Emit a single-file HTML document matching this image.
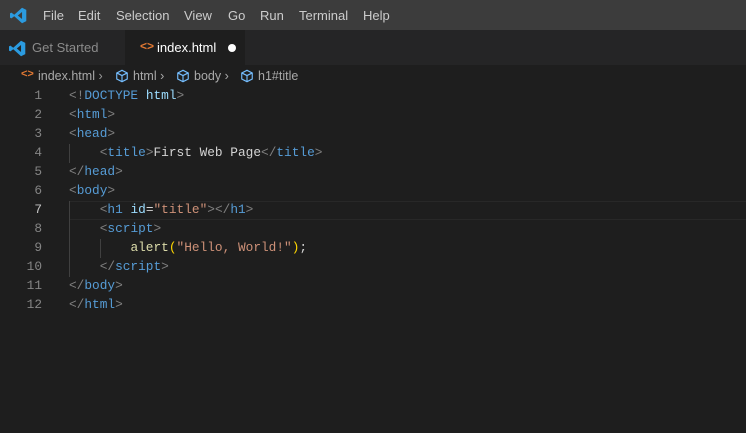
<!DOCTYPE html>
<html><head><style>
body{margin:0;width:746px;height:433px;background:#1e1e1e;overflow:hidden;font-family:"Liberation Sans",sans-serif;position:relative}
.t{position:absolute;white-space:pre}
#title{position:absolute;left:0;top:0;width:746px;height:30px;background:#3c3c3c}
#tabs{position:absolute;left:0;top:30px;width:746px;height:35px;background:#252526}
#act{position:absolute;left:125px;top:30px;width:120px;height:35px;background:#1e1e1e}
.menu{color:#ccc;font-size:13px;top:8px}
.code{font-family:"Liberation Mono",monospace;font-size:12.8px;left:69px}
.ln{font-family:"Liberation Mono",monospace;font-size:12.8px;color:#858585;text-align:right;width:42px;left:0}
.b{color:#808080}.k{color:#569cd6}.a{color:#9cdcfe}.s{color:#ce9178}.f{color:#dcdcaa}.w{color:#d4d4d4}.y{color:#ffd700}
.g{position:absolute;width:1px;background:#404040}
</style></head><body>
<div id="title"></div><div id="tabs"></div><div id="act"></div>
<svg style="position:absolute;left:10px;top:7px" width="17" height="17" viewBox="0 0 24 24"><path d="M17 1 L23 4 V20 L17 23 L6 13 L2 16 L0 15 V9 L2 8 L6 11 Z M17 7 L11 12 L17 17 Z" fill="#2b9be0"/></svg>
<span class="t menu" style="left:43px">File</span>
<span class="t menu" style="left:78px">Edit</span>
<span class="t menu" style="left:116px">Selection</span>
<span class="t menu" style="left:184px">View</span>
<span class="t menu" style="left:228px">Go</span>
<span class="t menu" style="left:260px">Run</span>
<span class="t menu" style="left:299px">Terminal</span>
<span class="t menu" style="left:363px">Help</span>
<svg style="position:absolute;left:9px;top:40px" width="17" height="17" viewBox="0 0 24 24"><path d="M17 1 L23 4 V20 L17 23 L6 13 L2 16 L0 15 V9 L2 8 L6 11 Z M17 7 L11 12 L17 17 Z" fill="#2b9be0"/></svg>
<span class="t" style="left:32px;top:40px;font-size:13px;color:#8b8b8b">Get Started</span>
<span class="t" style="left:140px;top:39px;font-size:12px;color:#e37933;font-weight:bold">&lt;&gt;</span>
<span class="t" style="left:157px;top:40px;font-size:13px;color:#fff">index.html</span>
<div style="position:absolute;left:228px;top:44px;width:8px;height:8px;border-radius:50%;background:#fff"></div>
<span class="t" style="left:21px;top:68px;font-size:11px;color:#e37933;font-weight:bold">&lt;&gt;</span>
<span class="t" style="left:38px;top:69px;font-size:12.5px;color:#a9a9a9">index.html <span style="color:#999">›</span></span>
<svg style="position:absolute;left:115px;top:69px" width="14" height="14" viewBox="0 0 16 16"><path d="M8 1.5 L14 4.5 V11.5 L8 14.5 L2 11.5 V4.5 Z M2 4.5 L8 7.5 L14 4.5 M8 7.5 V14.5" fill="none" stroke="#75beff" stroke-width="1.3"/></svg>
<span class="t" style="left:133px;top:69px;font-size:12.5px;color:#a9a9a9">html <span>›</span></span>
<svg style="position:absolute;left:176px;top:69px" width="14" height="14" viewBox="0 0 16 16"><path d="M8 1.5 L14 4.5 V11.5 L8 14.5 L2 11.5 V4.5 Z M2 4.5 L8 7.5 L14 4.5 M8 7.5 V14.5" fill="none" stroke="#75beff" stroke-width="1.3"/></svg>
<span class="t" style="left:194px;top:69px;font-size:12.5px;color:#a9a9a9">body <span>›</span></span>
<svg style="position:absolute;left:240px;top:69px" width="14" height="14" viewBox="0 0 16 16"><path d="M8 1.5 L14 4.5 V11.5 L8 14.5 L2 11.5 V4.5 Z M2 4.5 L8 7.5 L14 4.5 M8 7.5 V14.5" fill="none" stroke="#75beff" stroke-width="1.3"/></svg>
<span class="t" style="left:258px;top:69px;font-size:12.5px;color:#a9a9a9">h1#title</span>
<div style="position:absolute;left:69px;top:201px;width:677px;height:17px;border-top:1px solid #282828;border-bottom:1px solid #282828"></div>
<div class="g" style="left:69px;top:144px;height:19px"></div>
<div class="g" style="left:69px;top:201px;height:76px"></div>
<div class="g" style="left:100px;top:239px;height:19px"></div>
<div class="t ln" style="top:88px">1</div><div class="t ln" style="top:107px">2</div><div class="t ln" style="top:126px">3</div><div class="t ln" style="top:145px">4</div><div class="t ln" style="top:164px">5</div><div class="t ln" style="top:183px">6</div><div class="t ln" style="top:202px;color:#c6c6c6">7</div><div class="t ln" style="top:221px">8</div><div class="t ln" style="top:240px">9</div><div class="t ln" style="top:259px">10</div><div class="t ln" style="top:278px">11</div><div class="t ln" style="top:297px">12</div>
<div class="t code" style="top:88px"><span class="b">&lt;!</span><span class="k">DOCTYPE</span> <span class="a">html</span><span class="b">&gt;</span></div>
<div class="t code" style="top:107px"><span class="b">&lt;</span><span class="k">html</span><span class="b">&gt;</span></div>
<div class="t code" style="top:126px"><span class="b">&lt;</span><span class="k">head</span><span class="b">&gt;</span></div>
<div class="t code" style="top:145px">    <span class="b">&lt;</span><span class="k">title</span><span class="b">&gt;</span><span class="w">First Web Page</span><span class="b">&lt;/</span><span class="k">title</span><span class="b">&gt;</span></div>
<div class="t code" style="top:164px"><span class="b">&lt;/</span><span class="k">head</span><span class="b">&gt;</span></div>
<div class="t code" style="top:183px"><span class="b">&lt;</span><span class="k">body</span><span class="b">&gt;</span></div>
<div class="t code" style="top:202px">    <span class="b">&lt;</span><span class="k">h1</span> <span class="a">id</span><span class="w">=</span><span class="s">"title"</span><span class="b">&gt;&lt;/</span><span class="k">h1</span><span class="b">&gt;</span></div>
<div class="t code" style="top:221px">    <span class="b">&lt;</span><span class="k">script</span><span class="b">&gt;</span></div>
<div class="t code" style="top:240px">        <span class="f">alert</span><span class="y">(</span><span class="s">"Hello, World!"</span><span class="y">)</span><span class="w">;</span></div>
<div class="t code" style="top:259px">    <span class="b">&lt;/</span><span class="k">script</span><span class="b">&gt;</span></div>
<div class="t code" style="top:278px"><span class="b">&lt;/</span><span class="k">body</span><span class="b">&gt;</span></div>
<div class="t code" style="top:297px"><span class="b">&lt;/</span><span class="k">html</span><span class="b">&gt;</span></div>
</body></html>
